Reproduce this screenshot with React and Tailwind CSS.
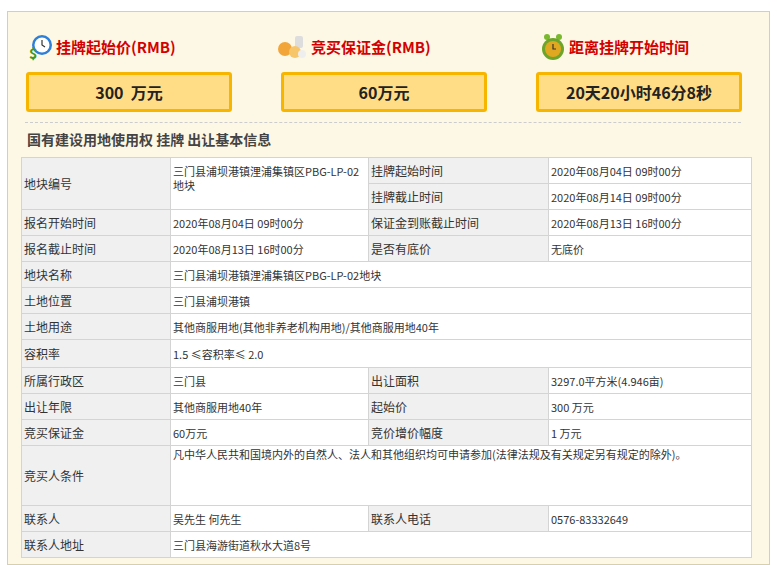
const F = { fontFamily: '"Noto Sans CJK SC", "DejaVu Sans", sans-serif' }
const L = 'bg-[#f0f0f0] border border-[#d4d4d4] px-[2px] text-[12px] text-[#333] align-middle'
const V = 'bg-white border border-[#d4d4d4] px-[2px] text-[11px] text-[#333] align-middle leading-[14px]'

function Head({ icon, text }) {
  return (
    <div className="flex items-center gap-[2px] h-[30px]">
      {icon}
      <span className="text-[15px] font-bold text-[#d40000]" style={{ fontFamily: '"Noto Sans CJK SC", serif' }}>{text}</span>
    </div>
  )
}

function Box({ children }) {
  return (
    <div className="h-[40px] border-[3px] border-[#f8b500] rounded-[3px] bg-[#ffdc86] flex items-center justify-center text-[16px] font-bold text-[#222]">
      {children}
    </div>
  )
}

const Clock = (
  <svg width="28" height="28" viewBox="0 0 28 28"><circle cx="16" cy="12" r="10" fill="#2d7fd8"/><circle cx="16" cy="12" r="7.5" fill="#fff"/><path d="M16 7v5l3 2" stroke="#333" strokeWidth="1.2" fill="none"/><text x="3" y="26" fontSize="14" fontWeight="bold" fill="#3c9a20">$</text></svg>
)
const Coins = (
  <svg width="34" height="28" viewBox="0 0 34 28"><rect x="20" y="3" width="8" height="12" rx="2" fill="#ddd"/><circle cx="10" cy="16" r="7" fill="#f2a63a"/><circle cx="20" cy="19" r="6" fill="#f7c66b"/><circle cx="27" cy="21" r="4" fill="#eee"/></svg>
)
const Alarm = (
  <svg width="28" height="30" viewBox="0 0 28 30"><circle cx="8" cy="5" r="3" fill="#7ab82e"/><circle cx="20" cy="5" r="3" fill="#7ab82e"/><circle cx="14" cy="17" r="11" fill="#6da42a"/><circle cx="14" cy="17" r="8" fill="#e0a820"/><path d="M14 12v5h3" stroke="#333" strokeWidth="1.2" fill="none"/></svg>
)

export default function App() {
  return (
    <div className="bg-white w-[777px] h-[565px] pt-[11px] pl-[7px]" style={F}>
      <div className="w-[763px] border border-[#d8cfb0] bg-[#fdf8e6] pt-[20px] pl-[13px] pr-[18px] pb-[6px]">
        <div className="grid grid-cols-[206px_206px_206px] gap-x-[49px] pl-[5px]">
          <div><Head icon={Clock} text="挂牌起始价(RMB)" /><div className="mt-[10px]"><Box>300&nbsp; 万元</Box></div></div>
          <div><div className="-ml-[6px]"><Head icon={Coins} text="竞买保证金(RMB)" /></div><div className="mt-[10px]"><Box>60万元</Box></div></div>
          <div><div className="ml-[3px]"><Head icon={Alarm} text="距离挂牌开始时间" /></div><div className="mt-[10px]"><Box>20天20小时46分8秒</Box></div></div>
        </div>
        <div className="border-t border-dashed border-[#ccc] mt-[10px] ml-[4px] mr-[10px]" />
        <div className="h-[32px] flex items-center pl-[6px] text-[14px] font-bold text-[#444]">国有建设用地使用权 挂牌 出让基本信息</div>
        <table className="border-collapse mt-[2px] w-[730px] table-fixed">
          <colgroup><col className="w-[149px]" /><col className="w-[198px]" /><col className="w-[180px]" /><col className="w-[203px]" /></colgroup>
          <tbody>
            <tr className="h-[26px]"><td rowSpan={2} className={L}>地块编号</td><td rowSpan={2} className={V + ' align-top pt-[6px]'}>三门县浦坝港镇浬浦集镇区PBG-LP-02地块</td><td className={L}>挂牌起始时间</td><td className={V}>2020年08月04日 09时00分</td></tr>
            <tr className="h-[26px]"><td className={L}>挂牌截止时间</td><td className={V}>2020年08月14日 09时00分</td></tr>
            <tr className="h-[26px]"><td className={L}>报名开始时间</td><td className={V}>2020年08月04日 09时00分</td><td className={L}>保证金到账截止时间</td><td className={V}>2020年08月13日 16时00分</td></tr>
            <tr className="h-[26px]"><td className={L}>报名截止时间</td><td className={V}>2020年08月13日 16时00分</td><td className={L}>是否有底价</td><td className={V}>无底价</td></tr>
            <tr className="h-[26px]"><td className={L}>地块名称</td><td colSpan={3} className={V}>三门县浦坝港镇浬浦集镇区PBG-LP-02地块</td></tr>
            <tr className="h-[26px]"><td className={L}>土地位置</td><td colSpan={3} className={V}>三门县浦坝港镇</td></tr>
            <tr className="h-[26px]"><td className={L}>土地用途</td><td colSpan={3} className={V}>其他商服用地(其他非养老机构用地)/其他商服用地40年</td></tr>
            <tr className="h-[28px]"><td className={L}>容积率</td><td colSpan={3} className={V}>1.5 ≤容积率≤ 2.0</td></tr>
            <tr className="h-[26px]"><td className={L}>所属行政区</td><td className={V}>三门县</td><td className={L}>出让面积</td><td className={V}>3297.0平方米(4.946亩)</td></tr>
            <tr className="h-[26px]"><td className={L}>出让年限</td><td className={V}>其他商服用地40年</td><td className={L}>起始价</td><td className={V}>300 万元</td></tr>
            <tr className="h-[26px]"><td className={L}>竞买保证金</td><td className={V}>60万元</td><td className={L}>竞价增价幅度</td><td className={V}>1 万元</td></tr>
            <tr className="h-[60px]"><td className={L}>竞买人条件</td><td colSpan={3} className={V + ' align-top pt-[1px] pr-[50px]'}>凡中华人民共和国境内外的自然人、法人和其他组织均可申请参加(法律法规及有关规定另有规定的除外)。</td></tr>
            <tr className="h-[26px]"><td className={L}>联系人</td><td className={V}>吴先生 何先生</td><td className={L}>联系人电话</td><td className={V}>0576-83332649</td></tr>
            <tr className="h-[26px]"><td className={L}>联系人地址</td><td colSpan={3} className={V}>三门县海游街道秋水大道8号</td></tr>
          </tbody>
        </table>
      </div>
    </div>
  )
}
